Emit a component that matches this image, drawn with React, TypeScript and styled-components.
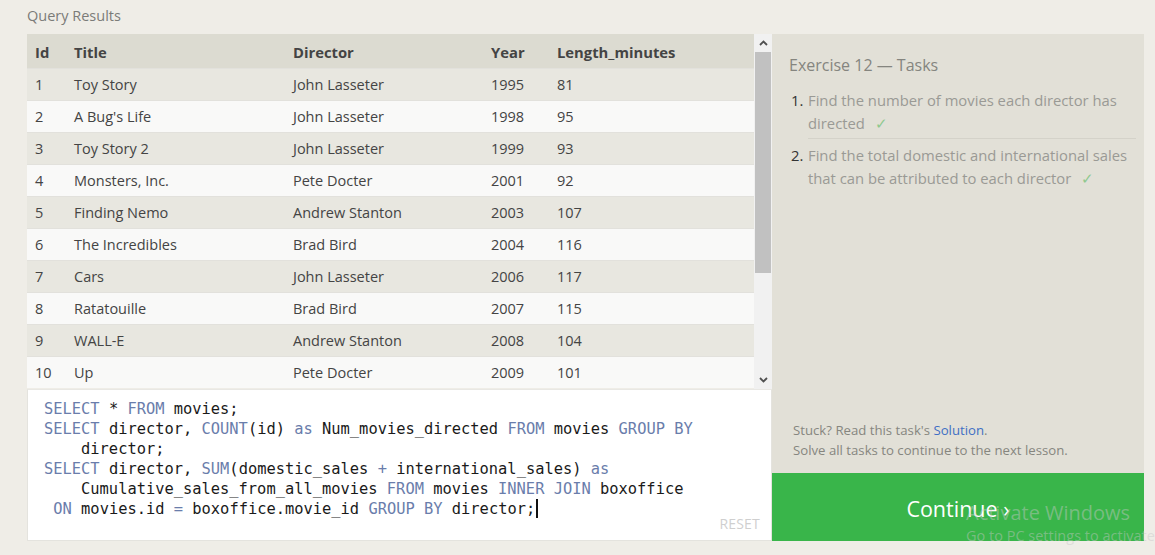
import React from "react";
import styled, { createGlobalStyle } from "styled-components";

const Global = createGlobalStyle`
  html, body { margin: 0; padding: 0; background: #efede7; }
  body { font-family: "Open Sans", "Noto Sans", sans-serif; }
  * { box-sizing: border-box; }
`;

const Page = styled.div`
  width: 1155px;
  height: 555px;
  padding: 0 11px 0 27px;
  position: relative;
  overflow: hidden;
  background: #efede7;
`;

const PageTitle = styled.div`
  height: 34px;
  line-height: 32px;
  font-size: 14.5px;
  color: #7b7b78;
`;

const Main = styled.div`
  display: grid;
  grid-template-columns: 745px 372px;
  grid-template-rows: 507px;
`;

const LeftCol = styled.div`
  display: flex;
  flex-direction: column;
`;

const TableArea = styled.div`
  display: flex;
  height: 355px;
`;

const TableWrap = styled.div`
  flex: 1;
  overflow: hidden;
`;

const Table = styled.table`
  width: 727px;
  border-collapse: collapse;
  table-layout: fixed;
  font-size: 14.5px;
  color: #444;
`;

const Th = styled.th<{ $w?: number }>`
  width: ${(p) => (p.$w ? `${p.$w}px` : "auto")};
  height: 34px;
  padding: 3px 0 0 8px;
  text-align: left;
  font-weight: 700;
  font-size: 14.8px;
  color: #444;
  background: #dcdbd1;
`;

const Tr = styled.tr<{ $odd: boolean }>`
  background: ${(p) => (p.$odd ? "#e8e7e0" : "#f9f9f8")};
  border-top: 1px solid #e2e1dc;
`;

const Td = styled.td`
  height: 32px;
  padding: 0 0 0 8px;
  white-space: nowrap;
`;

const Scrollbar = styled.div`
  width: 18px;
  display: flex;
  flex-direction: column;
  background: #f1f1f1;
`;

const ScrollBtn = styled.div`
  height: 18px;
  display: flex;
  align-items: center;
  justify-content: center;
  background: #f1f1f1;
`;

const Thumb = styled.div`
  height: 221px;
  margin: 0 1px;
  background: #c1c1c1;
`;

const Track = styled.div`
  flex: 1;
`;

const Editor = styled.div`
  position: relative;
  height: 152px;
  background: #fff;
  border: 1px solid #e4e3de;
  border-top: 1px solid #e9e8e4;
  padding: 9px 16px;
`;

const Code = styled.pre`
  margin: 0;
  font-family: "DejaVu Sans Mono", "Liberation Mono", monospace;
  font-size: 15.4px;
  line-height: 20px;
  color: #1a1a1a;
  white-space: pre;
`;

const Kw = styled.span`
  color: #6a7dab;
`;

const Caret = styled.span`
  display: inline-block;
  width: 2px;
  height: 19px;
  background: #111;
  vertical-align: -4px;
  margin-left: 1px;
`;

const Reset = styled.div`
  position: absolute;
  right: 11px;
  bottom: 7px;
  font-size: 14px;
  color: #cfcfcf;
  letter-spacing: 0.2px;
`;

const RightCol = styled.div`
  display: flex;
  flex-direction: column;
`;

const Panel = styled.div`
  flex: 1;
  background: #e2e0d7;
  padding: 20px 8px 13px 17px;
  display: flex;
  flex-direction: column;
`;

const PanelTitle = styled.div`
  font-size: 16px;
  color: #85857f;
  margin-bottom: 13px;
`;

const TaskList = styled.ol`
  margin: 0;
  padding: 0;
  list-style: none;
  display: flex;
  flex-direction: column;
  gap: 5px;
`;

const Task = styled.li`
  display: flex;
  font-size: 14.8px;
  line-height: 23px;
  color: #9a9a95;
  padding-left: 2px;
`;

const TaskNum = styled.span`
  color: #333;
  width: 17px;
  flex: none;
`;

const TaskText = styled.span<{ $sep?: boolean }>`
  flex: 1;
  padding-bottom: ${(p) => (p.$sep ? 3 : 0)}px;
  border-bottom: ${(p) => (p.$sep ? "1px solid #d4d2c9" : "none")};
`;

const Check = styled.span`
  color: #8fc98f;
  margin-left: 10px;
`;

const Spacer = styled.div`
  flex: 1;
`;

const Hint = styled.div`
  font-size: 13.2px;
  line-height: 20px;
  color: #86867f;
  padding-left: 4px;
`;

const Link = styled.span`
  color: #3f6fc4;
`;

const ContinueBtn = styled.div`
  height: 68px;
  background: #39b54a;
  color: #fff;
  font-size: 21.5px;
  display: flex;
  align-items: center;
  justify-content: center;
  padding-top: 3px;
`;

const Watermark = styled.div`
  position: absolute;
  left: 966px;
  top: 500px;
  color: rgba(200, 200, 200, 0.45);
  pointer-events: none;
  white-space: nowrap;
`;

const WmTitle = styled.div`
  font-size: 20px;
  line-height: 26px;
`;

const WmSub = styled.div`
  font-size: 14.5px;
  line-height: 20px;
`;

const rows: [number, string, string, number, number][] = [
  [1, "Toy Story", "John Lasseter", 1995, 81],
  [2, "A Bug's Life", "John Lasseter", 1998, 95],
  [3, "Toy Story 2", "John Lasseter", 1999, 93],
  [4, "Monsters, Inc.", "Pete Docter", 2001, 92],
  [5, "Finding Nemo", "Andrew Stanton", 2003, 107],
  [6, "The Incredibles", "Brad Bird", 2004, 116],
  [7, "Cars", "John Lasseter", 2006, 117],
  [8, "Ratatouille", "Brad Bird", 2007, 115],
  [9, "WALL-E", "Andrew Stanton", 2008, 104],
  [10, "Up", "Pete Docter", 2009, 101],
];

const Chevron = ({ up }: { up?: boolean }) => (
  <svg width="9" height="6" viewBox="0 0 9 6">
    <path
      d={up ? "M1 5 L4.5 1.5 L8 5" : "M1 1 L4.5 4.5 L8 1"}
      stroke="#505050"
      strokeWidth="1.8"
      fill="none"
    />
  </svg>
);

export default function App() {
  return (
    <>
      <Global />
      <Page>
        <PageTitle>Query Results</PageTitle>
        <Main>
          <LeftCol>
            <TableArea>
              <TableWrap>
                <Table>
                  <thead>
                    <tr>
                      <Th $w={39}>Id</Th>
                      <Th $w={219}>Title</Th>
                      <Th $w={198}>Director</Th>
                      <Th $w={66}>Year</Th>
                      <Th>Length_minutes</Th>
                    </tr>
                  </thead>
                  <tbody>
                    {rows.map((r, i) => (
                      <Tr key={r[0]} $odd={i % 2 === 0}>
                        {r.map((c, j) => (
                          <Td key={j}>{c}</Td>
                        ))}
                      </Tr>
                    ))}
                  </tbody>
                </Table>
              </TableWrap>
              <Scrollbar>
                <ScrollBtn>
                  <Chevron up />
                </ScrollBtn>
                <Thumb />
                <Track />
                <ScrollBtn>
                  <Chevron />
                </ScrollBtn>
              </Scrollbar>
            </TableArea>
            <Editor>
              <Code>
                <Kw>SELECT</Kw> * <Kw>FROM</Kw> movies;{"\n"}
                <Kw>SELECT</Kw> director, <Kw>COUNT</Kw>(id) <Kw>as</Kw> Num_movies_directed <Kw>FROM</Kw> movies <Kw>GROUP</Kw> <Kw>BY</Kw>
                {"\n"}    director;{"\n"}
                <Kw>SELECT</Kw> director, <Kw>SUM</Kw>(domestic_sales <Kw>+</Kw> international_sales) <Kw>as</Kw>
                {"\n"}    Cumulative_sales_from_all_movies <Kw>FROM</Kw> movies <Kw>INNER</Kw> <Kw>JOIN</Kw> boxoffice
                {"\n"} <Kw>ON</Kw> movies.id <Kw>=</Kw> boxoffice.movie_id <Kw>GROUP</Kw> <Kw>BY</Kw> director;<Caret />
              </Code>
              <Reset>RESET</Reset>
            </Editor>
          </LeftCol>
          <RightCol>
            <Panel>
              <PanelTitle>Exercise 12 — Tasks</PanelTitle>
              <TaskList>
                <Task>
                  <TaskNum>1.</TaskNum>
                  <TaskText $sep>
                    Find the number of movies each director has directed
                    <Check>✓</Check>
                  </TaskText>
                </Task>
                <Task>
                  <TaskNum>2.</TaskNum>
                  <TaskText>
                    Find the total domestic and international sales that can be attributed to each director
                    <Check>✓</Check>
                  </TaskText>
                </Task>
              </TaskList>
              <Spacer />
              <Hint>
                Stuck? Read this task's <Link>Solution</Link>.
                <br />
                Solve all tasks to continue to the next lesson.
              </Hint>
            </Panel>
            <ContinueBtn>Continue ›</ContinueBtn>
          </RightCol>
        </Main>
        <Watermark>
          <WmTitle>Activate Windows</WmTitle>
          <WmSub>Go to PC settings to activate</WmSub>
        </Watermark>
      </Page>
    </>
  );
}
